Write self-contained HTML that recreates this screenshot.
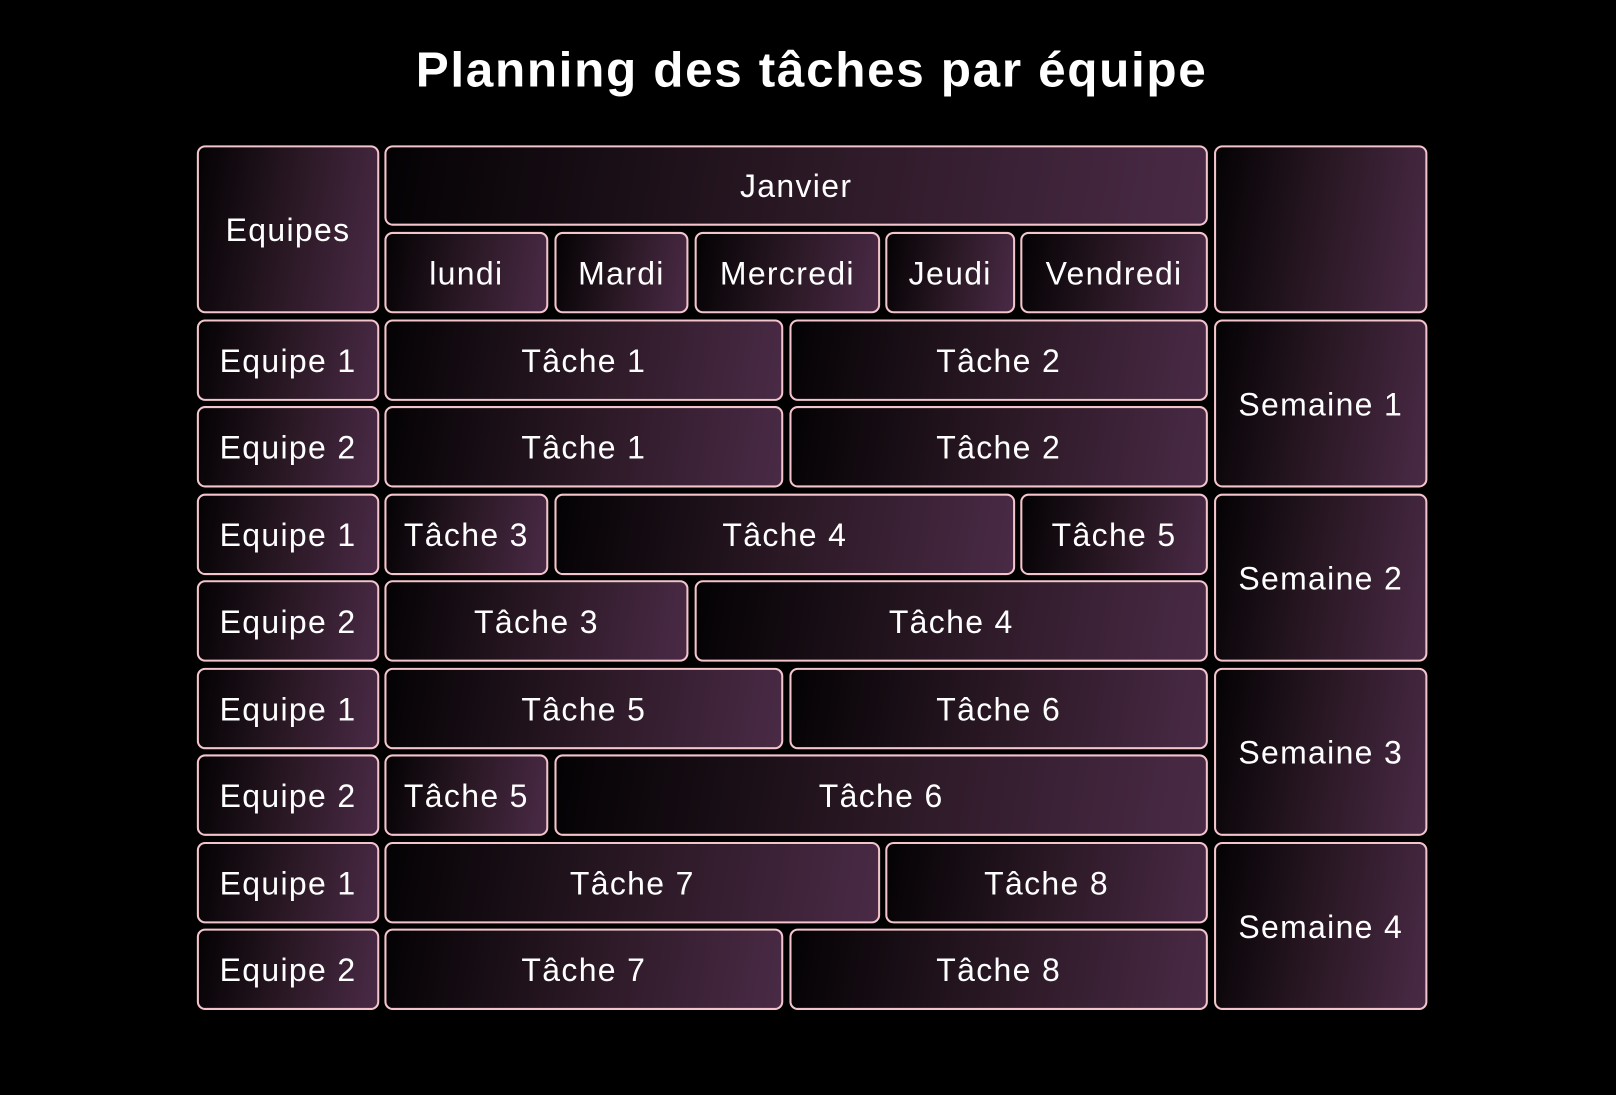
<!DOCTYPE html>
<html><head><meta charset="utf-8"><style>
html,body{margin:0;padding:0;background:#000;width:1616px;height:1094px;overflow:hidden}
#w{position:absolute;left:0;top:0;width:1568px;height:1062px;transform:scale(1.0306);transform-origin:0 0}
h1{position:absolute;left:0;width:1575px;top:41px;margin:0;text-align:center;color:#fff;font:bold 48px "Liberation Sans",sans-serif;letter-spacing:1.6px}
.b{position:absolute;box-sizing:border-box;border:2px solid #f4c4cc;border-radius:8px;background:linear-gradient(100deg,#040204 0%,#2a1824 50%,#4a2a46 100%);color:#fff;font:31px "Liberation Sans",sans-serif;display:flex;align-items:center;justify-content:center;letter-spacing:1.3px;padding-top:2px}
</style></head><body><div id="w">
<h1>Planning des tâches par équipe</h1>
<div class="b" style="left:191px;width:177px;top:141px;height:163px">Equipes</div>
<div class="b" style="left:373px;width:799px;top:141px;height:78px">Janvier</div>
<div class="b" style="left:373px;width:159px;top:225px;height:79px">lundi</div>
<div class="b" style="left:538px;width:130px;top:225px;height:79px">Mardi</div>
<div class="b" style="left:674px;width:180px;top:225px;height:79px">Mercredi</div>
<div class="b" style="left:859px;width:126px;top:225px;height:79px">Jeudi</div>
<div class="b" style="left:990px;width:182px;top:225px;height:79px">Vendredi</div>
<div class="b" style="left:1178px;width:207px;top:141px;height:163px"></div>

<div class="b" style="left:191px;width:177px;top:310px;height:79px">Equipe 1</div>
<div class="b" style="left:191px;width:177px;top:394px;height:79px">Equipe 2</div>
<div class="b" style="left:191px;width:177px;top:479px;height:79px">Equipe 1</div>
<div class="b" style="left:191px;width:177px;top:563px;height:79px">Equipe 2</div>
<div class="b" style="left:191px;width:177px;top:648px;height:79px">Equipe 1</div>
<div class="b" style="left:191px;width:177px;top:732px;height:79px">Equipe 2</div>
<div class="b" style="left:191px;width:177px;top:817px;height:79px">Equipe 1</div>
<div class="b" style="left:191px;width:177px;top:901px;height:79px">Equipe 2</div>

<div class="b" style="left:373px;width:387px;top:310px;height:79px">Tâche 1</div>
<div class="b" style="left:766px;width:406px;top:310px;height:79px">Tâche 2</div>
<div class="b" style="left:373px;width:387px;top:394px;height:79px">Tâche 1</div>
<div class="b" style="left:766px;width:406px;top:394px;height:79px">Tâche 2</div>
<div class="b" style="left:373px;width:159px;top:479px;height:79px">Tâche 3</div>
<div class="b" style="left:538px;width:447px;top:479px;height:79px">Tâche 4</div>
<div class="b" style="left:990px;width:182px;top:479px;height:79px">Tâche 5</div>
<div class="b" style="left:373px;width:295px;top:563px;height:79px">Tâche 3</div>
<div class="b" style="left:674px;width:498px;top:563px;height:79px">Tâche 4</div>
<div class="b" style="left:373px;width:387px;top:648px;height:79px">Tâche 5</div>
<div class="b" style="left:766px;width:406px;top:648px;height:79px">Tâche 6</div>
<div class="b" style="left:373px;width:159px;top:732px;height:79px">Tâche 5</div>
<div class="b" style="left:538px;width:634px;top:732px;height:79px">Tâche 6</div>
<div class="b" style="left:373px;width:481px;top:817px;height:79px">Tâche 7</div>
<div class="b" style="left:859px;width:313px;top:817px;height:79px">Tâche 8</div>
<div class="b" style="left:373px;width:387px;top:901px;height:79px">Tâche 7</div>
<div class="b" style="left:766px;width:406px;top:901px;height:79px">Tâche 8</div>

<div class="b" style="left:1178px;width:207px;top:310px;height:163px">Semaine 1</div>
<div class="b" style="left:1178px;width:207px;top:479px;height:163px">Semaine 2</div>
<div class="b" style="left:1178px;width:207px;top:648px;height:163px">Semaine 3</div>
<div class="b" style="left:1178px;width:207px;top:817px;height:163px">Semaine 4</div>
</div></body></html>
